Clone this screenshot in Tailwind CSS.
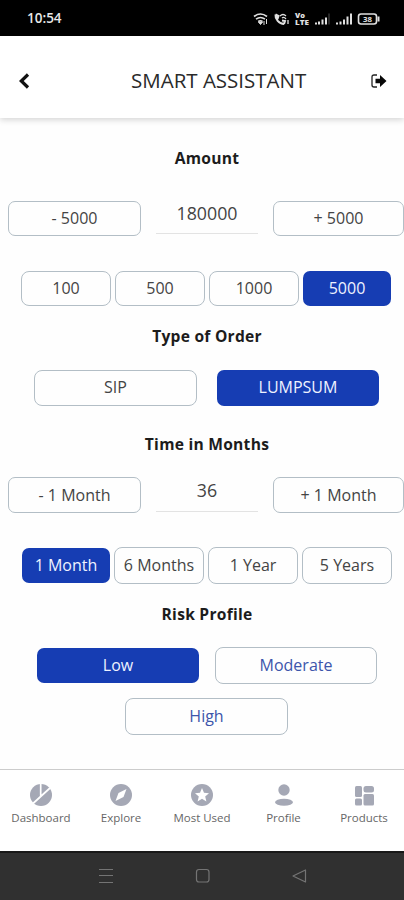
<!DOCTYPE html>
<html lang="en">
<head>
<meta charset="utf-8">
<title>Smart Assistant</title>
<script src="https://cdn.jsdelivr.net/npm/@tailwindcss/browser@4"></script>
</head>
<body class="bg-white">
<div class="w-[404px] h-[900px] flex flex-col overflow-hidden bg-[#fefefe] text-[#444] font-['Open_Sans','Noto_Sans',sans-serif] text-[16px] leading-none">
  <div class="h-9 shrink-0 bg-black flex items-center justify-between pl-[27px] pr-[23px] pt-[2px] text-[#e8e8e8]">
    <span class="text-[13.5px] font-semibold">10:54</span>
    <svg class="w-[128px] h-[14px]" viewBox="0 0 128 14" fill="none" stroke="#e0e0e0" stroke-width="1.6">
      <path d="M1 4.500Q7.500-.5 14 4.500M3 7.200Q7.500 3.800 12 7.200M5.200 9.500Q7.500 8 9.500 9.500"/><path d="M7.500 12.500l-2-2.500h4zM11 9v4M13.500 7v5" fill="#e0e0e0" stroke-width="1"/>
      <path d="M22.500 2.500C22 7 26 12 31 12M22.500 2.500l3 1.500-1 3M31 12l1-3-3-.5" stroke-width="2"/><path d="M27 4q3-3 6 0M29 6q2-1.500 4 1M35 8v4" stroke-width="1.300"/>
      <g fill="#e0e0e0" stroke="none" font-family="Open Sans" font-weight="800"><text x="42" y="6" font-size="6.500" textLength="10" lengthAdjust="spacingAndGlyphs">Vo</text><text x="42" y="13" font-size="6.500" textLength="14" lengthAdjust="spacingAndGlyphs">LTE</text></g>
      <path d="M63 12.500v-2M66 12.500v-3M69.500 12.500v-5M73 12.500v-7" stroke-width="2"/><path d="M76 12.500v-11" stroke="#333"/>
      <path d="M84 12.500v-2M87.500 12.500v-3M91 12.500v-5M94.500 12.500v-8M98 12.500v-11" stroke-width="2"/>
      <rect x="105.500" y="2" width="18" height="10" rx="2.500"/><path d="M125.500 4.500v5" stroke-width="2"/><text x="110" y="9.800" fill="#e0e0e0" stroke="none" font-family="Open Sans" font-weight="700" font-size="7.500" textLength="9" lengthAdjust="spacingAndGlyphs">38</text>
    </svg>
  </div>
  <header class="h-[82px] shrink-0 bg-white shadow-[0_2px_6px_rgba(0,0,0,0.16)] flex items-center pl-[18px] pr-[17px] pt-[8px]">
    <svg class="w-[12px] h-[16px]" viewBox="0 0 12 16" fill="none" stroke="#111" stroke-width="3.200"><path d="M10 1.500L3.300 8l6.700 6.500"/></svg>
    <h1 class="text-[20.5px] text-[#2a2a2a] ml-[101px] -mt-[2px] whitespace-nowrap">SMART ASSISTANT</h1>
    <svg class="w-[16px] h-[14px] ml-auto" viewBox="0 0 16 14"><path d="M6 1H3Q1 1 1 3v8q0 2 2 2h3" fill="none" stroke="#222" stroke-width="1.300"/><path d="M4.500 4.700H9V1l6.500 6L9 13V9.300H4.500z" fill="#080808"/></svg>
  </header>

  <main class="h-[651px] shrink-0 flex flex-col">
    <h2 class="mt-[33px] h-[15px] text-center ml-[10px] text-[15.6px] font-bold text-[#1c1c1c] tracking-[0.25px]">Amount</h2>
    <div class="mt-[35px] h-[35px] flex ml-[8px]">
      <button class="w-[133px] h-[35px] border border-[#b3bec6] rounded-[7px] pb-[2px]">- 5000</button>
      <div class="w-[102px] h-[33px] ml-[15px] border-b border-[#e3e3e3] text-center text-[17.800px] pt-[4px]">180000</div>
      <button class="w-[131px] h-[35px] ml-[15px] border border-[#b3bec6] rounded-[7px] pb-[2px]">+ 5000</button>
    </div>
    <div class="mt-[35px] h-[35px] flex gap-[4px] ml-[21px]">
      <button class="w-[90px] border border-[#b3bec6] rounded-[8px] pb-[2px]">100</button>
      <button class="w-[90px] border border-[#b3bec6] rounded-[8px] pb-[2px]">500</button>
      <button class="w-[90px] border border-[#b3bec6] rounded-[8px] pb-[2px]">1000</button>
      <button class="w-[88px] bg-[#163db3] text-[#eef2ff] rounded-[7px] pb-[2px]">5000</button>
    </div>
    <h2 class="mt-[23px] h-[15px] text-center ml-[10px] text-[15.6px] font-bold text-[#1c1c1c] tracking-[0.25px]">Type of Order</h2>
    <div class="mt-[26px] h-[36px] flex gap-[20px] ml-[34px]">
      <button class="w-[163px] border border-[#b3bec6] rounded-[8px] pb-[2px]">SIP</button>
      <button class="w-[162px] bg-[#163db3] text-[#eef2ff] rounded-[7px] pb-[2px]">LUMPSUM</button>
    </div>
    <h2 class="mt-[31px] h-[15px] text-center ml-[10px] text-[15.6px] font-bold text-[#1c1c1c] tracking-[0.25px]">Time in Months</h2>
    <div class="mt-[25px] h-[36px] flex ml-[8px]">
      <button class="w-[133px] h-[36px] border border-[#b3bec6] rounded-[7px]">- 1 Month</button>
      <div class="w-[102px] h-[35px] ml-[15px] border-b border-[#e3e3e3] text-center text-[17.800px] pt-[5px]">36</div>
      <button class="w-[131px] h-[36px] ml-[15px] border border-[#b3bec6] rounded-[7px]">+ 1 Month</button>
    </div>
    <div class="mt-[34px] h-[37px] flex gap-[4px] ml-[22px] whitespace-nowrap">
      <button class="w-[88px] h-[35px] mt-px bg-[#163db3] text-[#eef2ff] rounded-[7px] pb-[2px]">1 Month</button>
      <button class="w-[90px] border border-[#b3bec6] rounded-[8px] pb-[2px]">6 Months</button>
      <button class="w-[90px] border border-[#b3bec6] rounded-[8px] pb-[2px]">1 Year</button>
      <button class="w-[90px] border border-[#b3bec6] rounded-[8px] pb-[2px]">5 Years</button>
    </div>
    <h2 class="mt-[23px] h-[15px] text-center ml-[10px] text-[15.6px] font-bold text-[#1c1c1c] tracking-[0.25px]">Risk Profile</h2>
    <div class="mt-[25px] h-[37px] flex gap-[16px] ml-[37px]">
      <button class="w-[162px] h-[35px] mt-px bg-[#163db3] text-[#eef2ff] rounded-[7px] pb-[2px]">Low</button>
      <button class="w-[162px] border border-[#b3bec6] rounded-[8px] text-[#3c55ab] pb-[2px]">Moderate</button>
    </div>
    <div class="mt-[14px] h-[37px] flex ml-[125px]">
      <button class="w-[163px] border border-[#b3bec6] rounded-[8px] text-[#3c55ab] pb-[2px]">High</button>
    </div>
  </main>

  <nav class="h-[82px] shrink-0 bg-white border-t border-[#ccc] flex pl-[1px] pt-[14px] text-[11.500px] text-[#666] whitespace-nowrap">
    <a class="w-[80px] shrink-0 flex flex-col items-center gap-[6px]"><svg class="w-[22px] h-[22px]" viewBox="0 0 22 22"><circle cx="11" cy="11" r="11" fill="#a5a8b5"/><path d="M3 19.500L20 4M10.700 0v12" stroke="#fff" stroke-width="1.700"/></svg><span>Dashboard</span></a>
    <a class="w-[80px] shrink-0 flex flex-col items-center gap-[6px]"><svg class="w-[22px] h-[22px]" viewBox="0 0 22 22"><circle cx="11" cy="11" r="11" fill="#a5a8b5"/><path d="M16.500 5l-3 8-8 4 3-8z" fill="#fff"/></svg><span>Explore</span></a>
    <a class="w-[82px] shrink-0 flex flex-col items-center gap-[6px]"><svg class="w-[22px] h-[22px]" viewBox="0 0 22 22"><circle cx="11" cy="11" r="11" fill="#a5a8b5"/><path d="M11 4l2 4.800 5 .4-3.800 3.300 1.200 5-4.400-2.700-4.400 2.700 1.200-5L4 9.200l5-.4z" fill="#fff"/></svg><span>Most Used</span></a>
    <a class="w-[81px] shrink-0 flex flex-col items-center gap-[6px]"><svg class="w-[22px] h-[22px]" viewBox="0 0 22 22" fill="#a5a8b5"><circle cx="11" cy="6" r="5.700"/><ellipse cx="11" cy="18.300" rx="9" ry="3.500"/></svg><span>Profile</span></a>
    <a class="w-[80px] shrink-0 flex flex-col items-center gap-[6px]"><svg class="w-[22px] h-[22px]" viewBox="0 0 22 22" fill="#a5a8b5"><rect x="2" y="2" width="7" height="11" rx="1.500"/><rect x="2" y="14.500" width="7" height="7" rx="1.500"/><rect x="10.500" y="2" width="10.500" height="6.500" rx="2.500"/><rect x="10.500" y="10" width="10.500" height="11.500" rx="1.500"/></svg><span>Products</span></a>
  </nav>
  <div class="h-[49px] shrink-0 bg-[#303030] border-t-2 border-[#181818]">
    <svg class="w-[404px] h-[46px]" viewBox="0 0 404 46" fill="none" stroke="#747474" stroke-width="1.200"><path d="M99 16.500h14M99 22.500h14M99 29.500h14"/><rect x="196.500" y="16.500" width="12.500" height="12.500" rx="2.500"/><path d="M305.500 17v12l-12.500-6z" stroke-linejoin="round"/></svg>
  </div>
</div>
</body>
</html>
